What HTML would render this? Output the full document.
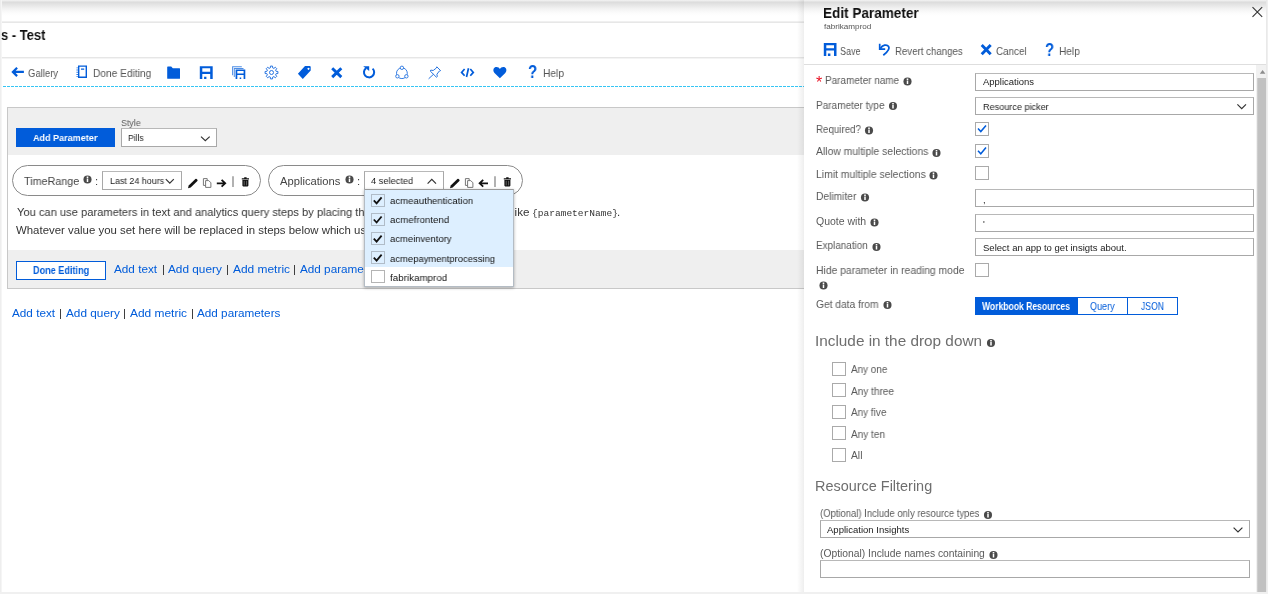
<!DOCTYPE html>
<html lang="en">
<head>
<meta charset="utf-8">
<title>Edit Parameter</title>
<style>
*{box-sizing:border-box;margin:0;padding:0}
html,body{width:1268px;height:594px;overflow:hidden;background:#fff}
body{position:relative;font-family:"Liberation Sans",sans-serif;font-size:12px;color:#333}
.a{position:absolute}
.t{position:absolute;white-space:nowrap;line-height:1;transform-origin:0 0;will-change:transform}
.k{color:#015cda}
svg{position:absolute;left:0;top:0;overflow:visible;pointer-events:none}
.inp{position:absolute;border:1px solid #a8a8a8;border-top-color:#b8b8b8;background:#fff}
.cb{position:absolute;width:14px;height:14px;border:1px solid #aaa;background:#fff}
.i{position:absolute;width:8px;height:8px;border-radius:50%;background:#4a4a4a;color:#fff}
.i:before{content:"";position:absolute;left:3.25px;top:1.3px;width:1.5px;height:1.5px;background:#fff;border-radius:50%}
.i:after{content:"";position:absolute;left:3.25px;top:3.4px;width:1.5px;height:3.2px;background:#fff}
</style>
</head>
<body>

<!-- page chrome -->
<div class="a" style="left:0;top:0;width:1268px;height:19px;background:linear-gradient(#f4f4f4 0,#dcdcdc 2.2px,#e4e4e4 4.5px,#f3f3f3 9px,#fcfcfc 13px,#fff 16px)"></div>
<div class="a" style="left:0;top:0;width:2px;height:594px;background:linear-gradient(90deg,#eee 0,#eee 1px,#f5f5f5 1px)"></div>
<div class="a" style="left:2px;top:21px;width:802px;height:1px;background:#f0f0f0"></div><div class="a" style="left:2px;top:22px;width:802px;height:1px;background:#e7e7e7"></div>
<div class="a" style="left:2px;top:57px;width:802px;height:1px;background:#e6e6e6"></div><div class="a" style="left:2px;top:58px;width:802px;height:1px;background:#f4f4f4"></div>
<div class="a" style="left:3px;top:86px;width:801px;height:1px;background:repeating-linear-gradient(90deg,#36c5f4 0,#36c5f4 3px,#fff 3px,#fff 4px)"></div>

<!-- parameters section -->
<div class="a" style="left:7px;top:107px;width:800px;height:182px;background:#efefef;border:1px solid #c8c8c8"></div>
<div class="a" style="left:8px;top:155px;width:800px;height:95px;background:#fff"></div>
<div class="a" style="left:16px;top:128px;width:99px;height:19px;background:#015cda"></div>
<div class="inp" style="left:121px;top:128px;width:96px;height:19px"></div>

<div class="a" style="left:12px;top:165px;width:249px;height:31px;border:1px solid #8a8a8a;border-radius:16px;background:#fff"></div>
<div class="a" style="left:268px;top:165px;width:255px;height:31px;border:1px solid #8a8a8a;border-radius:16px;background:#fff"></div>
<div class="inp" style="left:102px;top:171px;width:80px;height:19px"></div>
<div class="inp" style="left:364px;top:171px;width:80px;height:19px"></div>

<div class="a" style="left:16px;top:261px;width:90px;height:19px;border:1px solid #015cda;background:#fff"></div>

<div class="t" id="title" style="left:1.1px;top:28px;font-size:14.4px;font-weight:bold;color:#111;transform:scaleX(0.901);">s - Test</div>
<div class="t" id="g1" style="left:28.4px;top:68px;font-size:10.8px;color:#555;transform:scaleX(0.879);">Gallery</div>
<div class="t" id="g2" style="left:92.7px;top:68px;font-size:10.8px;color:#555;transform:scaleX(0.943);">Done Editing</div>
<div class="t" id="g3" style="left:543px;top:68px;font-size:10.8px;color:#555;transform:scaleX(0.946);">Help</div>
<div class="t" id="q1" style="left:528.3px;top:64px;font-size:17.5px;font-weight:bold;color:#015cda;transform:scaleX(0.86);">?</div>
<div class="t" id="addp" style="left:33.1px;top:133px;font-size:9.8px;font-weight:bold;color:#fff;transform:scaleX(0.922);">Add Parameter</div>
<div class="t" id="style" style="left:121.1px;top:118px;font-size:9.6px;color:#5a5a5a;transform:scaleX(0.924);">Style</div>
<div class="t" id="pills" style="left:128.3px;top:133px;font-size:9.4px;color:#222;transform:scaleX(0.908);">Pills</div>
<div class="t" id="tr" style="left:23.7px;top:176px;font-size:11.2px;color:#444;transform:scaleX(0.962);">TimeRange</div>
<div class="t" id="c1" style="left:95.3px;top:176px;font-size:11.2px;color:#444;">:</div>
<div class="t" id="l24" style="left:109.8px;top:176px;font-size:9.4px;color:#222;transform:scaleX(0.954);">Last 24 hours</div>
<div class="t" id="apps" style="left:280.2px;top:176px;font-size:11.2px;color:#444;">Applications</div>
<div class="t" id="c2" style="left:357.3px;top:176px;font-size:11.2px;color:#444;">:</div>
<div class="t" id="sel4" style="left:371.3px;top:176px;font-size:9.4px;color:#222;transform:scaleX(0.988);">4 selected</div>
<div class="t" id="ln1" style="left:16.6px;top:207px;font-size:11.3px;color:#333;transform:scaleX(0.986);">You can use parameters in text and analytics query steps by placing their names in braces,</div>
<div class="t" id="ln2" style="left:16.4px;top:225px;font-size:11.3px;color:#333;transform:scaleX(1.01);">Whatever value you set here will be replaced in steps below which use this parameter.</div>
<div class="t" id="like" style="left:511.6px;top:207px;font-size:11.3px;color:#333;transform:scaleX(1.032);">like</div>
<div class="t" id="mono" style="left:531.98px;top:209px;font-size:9.35px;color:#333;transform:scaleX(1.022);font-family:'Liberation Mono',monospace;">{parameterName}</div>
<div class="t" id="dot" style="left:617.2px;top:207px;font-size:11.3px;color:#333;">.</div>
<div class="t" id="done" style="left:33px;top:266px;font-size:10.3px;font-weight:bold;color:#015cda;transform:scaleX(0.884);">Done Editing</div>
<div class="t" id="r1a" style="left:114.1px;top:263px;font-size:11.6px;color:#015cda;transform:scaleX(1.013);">Add text</div>
<div class="t" id="r1s1" style="left:161.5px;top:263px;font-size:11.6px;color:#333;">|</div>
<div class="t" id="r1b" style="left:168.4px;top:263px;font-size:11.6px;color:#015cda;transform:scaleX(1.018);">Add query</div>
<div class="t" id="r1s2" style="left:225.5px;top:263px;font-size:11.6px;color:#333;">|</div>
<div class="t" id="r1c" style="left:232.7px;top:263px;font-size:11.6px;color:#015cda;transform:scaleX(1.029);">Add metric</div>
<div class="t" id="r1s3" style="left:292.9px;top:263px;font-size:11.6px;color:#333;">|</div>
<div class="t" id="r1d" style="left:299.8px;top:263px;font-size:11.6px;color:#015cda;transform:scaleX(1.011);">Add parameters</div>
<div class="t" id="r2a" style="left:11.7px;top:307px;font-size:11.6px;color:#015cda;transform:scaleX(1.013);">Add text</div>
<div class="t" id="r2s1" style="left:59.1px;top:307px;font-size:11.6px;color:#333;">|</div>
<div class="t" id="r2b" style="left:66px;top:307px;font-size:11.6px;color:#015cda;transform:scaleX(1.018);">Add query</div>
<div class="t" id="r2s2" style="left:123.1px;top:307px;font-size:11.6px;color:#333;">|</div>
<div class="t" id="r2c" style="left:130.3px;top:307px;font-size:11.6px;color:#015cda;transform:scaleX(1.029);">Add metric</div>
<div class="t" id="r2s3" style="left:190.5px;top:307px;font-size:11.6px;color:#333;">|</div>
<div class="t" id="r2d" style="left:197.4px;top:307px;font-size:11.6px;color:#015cda;transform:scaleX(1.011);">Add parameters</div>

<!-- dropdown -->
<div class="a" style="left:364px;top:189px;width:150px;height:98px;background:#fff;border:1px solid #b4bcc4;border-top-color:#999;box-shadow:0 1px 3px rgba(0,0,0,.3)"></div>
<div class="a" style="left:365px;top:190px;width:148px;height:77px;background:#ddefff"></div>
<div class="cb" style="left:371px;top:194px;width:14px;height:13px;background:transparent;border-color:#b0bcc8"></div>
<div class="cb" style="left:371px;top:213px;width:14px;height:13px;background:transparent;border-color:#b0bcc8"></div>
<div class="cb" style="left:371px;top:232px;width:14px;height:13px;background:transparent;border-color:#b0bcc8"></div>
<div class="cb" style="left:371px;top:251px;width:14px;height:13px;background:transparent;border-color:#b0bcc8"></div>
<div class="cb" style="left:371px;top:270px;width:14px;height:13px;border-color:#b4b4b4"></div>

<div class="t" id="d1" style="left:389.8px;top:196px;font-size:9.9px;color:#111;transform:scaleX(0.97);">acmeauthentication</div>
<div class="t" id="d2" style="left:389.8px;top:215px;font-size:9.9px;color:#111;transform:scaleX(0.978);">acmefrontend</div>
<div class="t" id="d3" style="left:389.8px;top:234px;font-size:9.9px;color:#111;transform:scaleX(0.958);">acmeinventory</div>
<div class="t" id="d4" style="left:389.8px;top:254px;font-size:9.9px;color:#111;transform:scaleX(0.957);">acmepaymentprocessing</div>
<div class="t" id="d5" style="left:389.8px;top:273px;font-size:9.9px;color:#111;transform:scaleX(0.991);">fabrikamprod</div>

<!-- right panel -->
<div class="a" style="left:797px;top:0;width:7px;height:592px;background:linear-gradient(90deg,rgba(0,0,0,0),rgba(0,0,0,.065))"></div>
<div class="a" style="left:804px;top:0;width:464px;height:594px;background:#fff"></div>
<div class="a" style="left:804px;top:0;width:464px;height:19px;background:linear-gradient(#f4f4f4 0,#dcdcdc 2.2px,#e4e4e4 4.5px,#f3f3f3 9px,#fcfcfc 13px,#fff 16px)"></div>
<div class="a" style="left:804px;top:64px;width:462px;height:1px;background:#dedede"></div>

<div class="inp" style="left:975px;top:73px;width:279px;height:18px"></div>
<div class="inp" style="left:975px;top:97px;width:279px;height:18px"></div>
<div class="cb" style="left:975px;top:122px"></div>
<div class="cb" style="left:975px;top:144px"></div>
<div class="cb" style="left:975px;top:166px"></div>
<div class="inp" style="left:975px;top:189px;width:279px;height:18px"></div>
<div class="inp" style="left:975px;top:214px;width:279px;height:18px"></div>
<div class="inp" style="left:975px;top:238px;width:279px;height:18px"></div>
<div class="cb" style="left:975px;top:263px"></div>

<div class="a" style="left:975px;top:297px;width:203px;height:18px;border:1px solid #015cda;background:#fff"></div>
<div class="a" style="left:975px;top:297px;width:103px;height:18px;background:#015cda"></div>
<div class="a" style="left:1127px;top:297px;width:1px;height:18px;background:#015cda"></div>

<div class="cb" style="left:832px;top:362px"></div>
<div class="cb" style="left:832px;top:383px"></div>
<div class="cb" style="left:832px;top:405px"></div>
<div class="cb" style="left:832px;top:426px"></div>
<div class="cb" style="left:832px;top:448px"></div>

<div class="inp" style="left:820px;top:520px;width:430px;height:18px"></div>
<div class="inp" style="left:820px;top:560px;width:430px;height:18px"></div>


<div class="t" id="ptitle" style="left:823.1px;top:5px;font-size:15px;font-weight:bold;color:#111;transform:scaleX(0.904);">Edit Parameter</div>
<div class="t" id="psub" style="left:824px;top:23px;font-size:7.8px;color:#555;transform:scaleX(1.041);">fabrikamprod</div>
<div class="t" id="psave" style="left:840.4px;top:46px;font-size:10.8px;color:#555;transform:scaleX(0.837);">Save</div>
<div class="t" id="prev" style="left:894.8px;top:46px;font-size:10.8px;color:#555;transform:scaleX(0.895);">Revert changes</div>
<div class="t" id="pcan" style="left:996px;top:46px;font-size:10.8px;color:#555;transform:scaleX(0.912);">Cancel</div>
<div class="t" id="phelp" style="left:1059.2px;top:46px;font-size:10.8px;color:#555;transform:scaleX(0.937);">Help</div>
<div class="t" id="q2" style="left:1044.7px;top:42px;font-size:17.5px;font-weight:bold;color:#015cda;transform:scaleX(0.85);">?</div>
<div class="t" id="star" style="left:815.8px;top:75px;font-size:16px;color:#e81123;">*</div>
<div class="t" id="L1" style="left:824.7px;top:75px;font-size:10.5px;color:#5a5a5a;transform:scaleX(0.949);">Parameter name</div>
<div class="t" id="L2" style="left:816.1px;top:100px;font-size:10.5px;color:#5a5a5a;transform:scaleX(0.955);">Parameter type</div>
<div class="t" id="L3" style="left:816.1px;top:124px;font-size:10.5px;color:#5a5a5a;transform:scaleX(0.928);">Required?</div>
<div class="t" id="L4" style="left:816.1px;top:146px;font-size:10.5px;color:#5a5a5a;transform:scaleX(0.987);">Allow multiple selections</div>
<div class="t" id="L5" style="left:816.1px;top:169px;font-size:10.5px;color:#5a5a5a;transform:scaleX(0.989);">Limit multiple selections</div>
<div class="t" id="L6" style="left:816.1px;top:191px;font-size:10.5px;color:#5a5a5a;transform:scaleX(0.976);">Delimiter</div>
<div class="t" id="L7" style="left:816.1px;top:216px;font-size:10.5px;color:#5a5a5a;transform:scaleX(0.991);">Quote with</div>
<div class="t" id="L8" style="left:816.1px;top:240px;font-size:10.5px;color:#5a5a5a;transform:scaleX(0.943);">Explanation</div>
<div class="t" id="L9" style="left:816.1px;top:265px;font-size:10.5px;color:#5a5a5a;transform:scaleX(0.986);">Hide parameter in reading mode</div>
<div class="t" id="L10" style="left:816.1px;top:299px;font-size:10.5px;color:#5a5a5a;transform:scaleX(0.974);">Get data from</div>
<div class="t" id="I1" style="left:982.5px;top:77px;font-size:9.4px;color:#222;transform:scaleX(1.011);">Applications</div>
<div class="t" id="I2" style="left:982.5px;top:102px;font-size:9.4px;color:#222;transform:scaleX(0.97);">Resource picker</div>
<div class="t" id="I3" style="left:983px;top:195px;font-size:9.4px;color:#222;">,</div>
<div class="t" id="I4" style="left:983px;top:219px;font-size:9.4px;color:#222;">'</div>
<div class="t" id="I5" style="left:982.5px;top:243px;font-size:9.4px;color:#222;transform:scaleX(1.017);">Select an app to get insigts about.</div>
<div class="t" id="B1" style="left:982.2px;top:302px;font-size:10.1px;font-weight:bold;color:#fff;transform:scaleX(0.85);">Workbook Resources</div>
<div class="t" id="B2" style="left:1089.8px;top:302px;font-size:10.2px;color:#015cda;transform:scaleX(0.887);">Query</div>
<div class="t" id="B3" style="left:1141.3px;top:302px;font-size:10.2px;color:#015cda;transform:scaleX(0.847);">JSON</div>
<div class="t" id="H1" style="left:815.03px;top:334px;font-size:14.3px;color:#6e6e6e;transform:scaleX(1.072);">Include in the drop down</div>
<div class="t" id="H2" style="left:815.49px;top:479px;font-size:14.3px;color:#6e6e6e;transform:scaleX(1.01);">Resource Filtering</div>
<div class="t" id="C1" style="left:850.5px;top:365px;font-size:10.3px;color:#5a5a5a;transform:scaleX(0.964);">Any one</div>
<div class="t" id="C2" style="left:850.5px;top:387px;font-size:10.3px;color:#5a5a5a;transform:scaleX(0.979);">Any three</div>
<div class="t" id="C3" style="left:850.5px;top:408px;font-size:10.3px;color:#5a5a5a;transform:scaleX(0.967);">Any five</div>
<div class="t" id="C4" style="left:850.5px;top:430px;font-size:10.3px;color:#5a5a5a;transform:scaleX(0.975);">Any ten</div>
<div class="t" id="C5" style="left:850.5px;top:451px;font-size:10.3px;color:#5a5a5a;transform:scaleX(0.959);">All</div>
<div class="t" id="O1" style="left:820.2px;top:509px;font-size:10.3px;color:#5a5a5a;transform:scaleX(0.919);">(Optional) Include only resource types</div>
<div class="t" id="O2" style="left:820.2px;top:549px;font-size:10.3px;color:#5a5a5a;">(Optional) Include names containing</div>
<div class="t" id="I6" style="left:827.2px;top:525px;font-size:9.4px;color:#222;transform:scaleX(1.017);">Application Insights</div>

<!-- scrollbar -->
<div class="a" style="left:1256px;top:65px;width:10px;height:527px;background:#f1f1f1"></div>
<div class="a" style="left:1257px;top:78px;width:9px;height:514px;background:linear-gradient(90deg,#dadada 0,#c1c1c1 1px)"></div>
<div class="a" style="left:1266px;top:0;width:2px;height:594px;background:linear-gradient(90deg,#e6e6e6,#f2f2f2)"></div>
<div class="a" style="left:0;top:592px;width:1268px;height:2px;background:#f0f0f0"></div>

<svg width="1268" height="594" viewBox="0 0 1268 594">
<g fill="#015cda" stroke="none">
 <!-- back arrow -->
 <path d="M23.9 71.9H13.6M17.1 67.7L12.9 71.9L17.1 76.1" fill="none" stroke="#015cda" stroke-width="2.2"/>
 <!-- notebook -->
 <path d="M78 65.4H87V78H78Z M79.4 66.8V76.6H85.6V66.8Z M81 68.6H84.2V69.8H81Z" fill-rule="evenodd"/>
 <path d="M76.4 67.4H78V68.3H76.4Z M76.4 69.6H78V70.5H76.4Z M76.4 71.8H78V72.7H76.4Z M76.4 74H78V74.9H76.4Z M76.4 76.2H78V77.1H76.4Z" opacity=".8"/>
 <!-- folder -->
 <path d="M167.2 67V78.2Q167.2 78.7 167.7 78.7H179.5Q180 78.7 180 78.2V68.7Q180 68.2 179.5 68.2H172.8L171.2 66.6H167.7Q167.2 66.6 167.2 67Z"/>
 <!-- save -->
 <path d="M199.8 66.2H212.7V78.9H210.2V73.9H202.3V78.9H199.8Z M202.3 68.2V71.7H210.2V68.2Z M204.1 76.8H206.4V78.9H204.1Z" fill-rule="evenodd"/>
 <!-- save as -->
 <path d="M235.6 69.4H245.3V78.9H243.6V75.1H237.3V78.9H235.6Z M237.3 70.9V73.6H243.6V70.9Z M239.7 77.6H241.2V78.9H239.7Z" fill-rule="evenodd"/>
 <path d="M232.1 66.2H241.8V67.2H233.1V75.2H232.1Z M233.8 67.9H243.5V68.9H234.8V77H233.8Z" opacity=".7"/>
 <!-- tag -->
 <path d="M305 66H309.6Q310.7 66 310.7 67.1V70.6L302.8 78.9L297.9 73.7Z M308.5 67.7a1 1 0 1 0 .01 0Z" fill-rule="evenodd"/>
 <!-- heart -->
 <path d="M499.9 78.2L494.5 72.9C492.6 70.9 493.2 67.6 495.9 67C497.6 66.7 499.2 67.6 499.9 69.1C500.6 67.6 502.2 66.7 503.9 67C506.6 67.6 507.2 70.9 505.3 72.9Z"/>
</g>
<g fill="none" stroke="#015cda">
 <!-- X -->
 <path d="M332.2 68.2L341.3 77.1M341.3 68.2L332.2 77.1" stroke-width="2.9"/>
 <!-- refresh -->
 <path d="M372.6 68.6A5.1 5.1 0 1 1 366 68.2" stroke-width="2"/>
 <path d="M363.2 66.2H369.2V71Z" fill="#015cda" stroke="none"/>
 <!-- gear -->
 <g stroke-width="1" transform="translate(271.5 72.5)" opacity=".85">
  <circle r="2"/>
  <path d="M-1.22 -4.54L-1.02 -6.42L1.02 -6.42L1.22 -4.54L2.35 -4.07L3.82 -5.26L5.26 -3.82L4.07 -2.35L4.54 -1.22L6.42 -1.02L6.42 1.02L4.54 1.22L4.07 2.35L5.26 3.82L3.82 5.26L2.35 4.07L1.22 4.54L1.02 6.42L-1.02 6.42L-1.22 4.54L-2.35 4.07L-3.82 5.26L-5.26 3.82L-4.07 2.35L-4.54 1.22L-6.42 1.02L-6.42 -1.02L-4.54 -1.22L-4.07 -2.35L-5.26 -3.82L-3.82 -5.26L-2.35 -4.07Z" stroke-linejoin="round"/>
 </g>
 <!-- share -->
 <g stroke-width="1" opacity=".8">
  <circle cx="401.9" cy="73.2" r="5.4"/>
  <circle cx="401.9" cy="67.8" r="1.7" fill="#fff"/>
  <circle cx="397.4" cy="76.3" r="1.7" fill="#fff"/>
  <circle cx="406.4" cy="76.3" r="1.7" fill="#fff"/>
 </g>
 <!-- pin -->
 <g stroke-width="1" opacity=".85">
  <path d="M436.8 66.8L440.6 70.6L439.4 71L436.9 74.2L437.3 76.6L436.4 77.2L430.2 71L430.8 70.1L433.2 70.5L436.4 68Z"/>
  <path d="M433.6 74.2L428.6 78.8"/>
 </g>
 <!-- code -->
 <path d="M464.6 69L461.6 72.4L464.6 75.8M470.3 69L473.3 72.4L470.3 75.8M468.5 68.2L466.5 77" stroke-width="1.7"/>
</g>

<!-- info icons -->
<g>
<circle cx="87.5" cy="179.5" r="4.05" fill="#4a4a4a"/><path d="M86.75 178.60h1.5v3.5h-1.5z M86.70 176.50h1.6v1.4h-1.6z" fill="#fff"/>
<circle cx="349.5" cy="179.5" r="4.05" fill="#4a4a4a"/><path d="M348.75 178.60h1.5v3.5h-1.5z M348.70 176.50h1.6v1.4h-1.6z" fill="#fff"/>
<circle cx="907.5" cy="81.5" r="4.05" fill="#4a4a4a"/><path d="M906.75 80.60h1.5v3.5h-1.5z M906.70 78.50h1.6v1.4h-1.6z" fill="#fff"/>
<circle cx="893" cy="106" r="4.05" fill="#4a4a4a"/><path d="M892.25 105.10h1.5v3.5h-1.5z M892.20 103.00h1.6v1.4h-1.6z" fill="#fff"/>
<circle cx="869" cy="130.5" r="4.05" fill="#4a4a4a"/><path d="M868.25 129.60h1.5v3.5h-1.5z M868.20 127.50h1.6v1.4h-1.6z" fill="#fff"/>
<circle cx="936.5" cy="153" r="4.05" fill="#4a4a4a"/><path d="M935.75 152.10h1.5v3.5h-1.5z M935.70 150.00h1.6v1.4h-1.6z" fill="#fff"/>
<circle cx="933.5" cy="175.5" r="4.05" fill="#4a4a4a"/><path d="M932.75 174.60h1.5v3.5h-1.5z M932.70 172.50h1.6v1.4h-1.6z" fill="#fff"/>
<circle cx="865" cy="197.5" r="4.05" fill="#4a4a4a"/><path d="M864.25 196.60h1.5v3.5h-1.5z M864.20 194.50h1.6v1.4h-1.6z" fill="#fff"/>
<circle cx="874.5" cy="222.5" r="4.05" fill="#4a4a4a"/><path d="M873.75 221.60h1.5v3.5h-1.5z M873.70 219.50h1.6v1.4h-1.6z" fill="#fff"/>
<circle cx="876.5" cy="247" r="4.05" fill="#4a4a4a"/><path d="M875.75 246.10h1.5v3.5h-1.5z M875.70 244.00h1.6v1.4h-1.6z" fill="#fff"/>
<circle cx="823.5" cy="285.5" r="4.05" fill="#4a4a4a"/><path d="M822.75 284.60h1.5v3.5h-1.5z M822.70 282.50h1.6v1.4h-1.6z" fill="#fff"/>
<circle cx="887.5" cy="305" r="4.05" fill="#4a4a4a"/><path d="M886.75 304.10h1.5v3.5h-1.5z M886.70 302.00h1.6v1.4h-1.6z" fill="#fff"/>
<circle cx="991" cy="343" r="4.05" fill="#4a4a4a"/><path d="M990.25 342.10h1.5v3.5h-1.5z M990.20 340.00h1.6v1.4h-1.6z" fill="#fff"/>
<circle cx="988" cy="515" r="4.05" fill="#4a4a4a"/><path d="M987.25 514.10h1.5v3.5h-1.5z M987.20 512.00h1.6v1.4h-1.6z" fill="#fff"/>
<circle cx="993.5" cy="555" r="4.05" fill="#4a4a4a"/><path d="M992.75 554.10h1.5v3.5h-1.5z M992.70 552.00h1.6v1.4h-1.6z" fill="#fff"/>
</g>
<!-- right panel icons -->
<g fill="#015cda">
 <path d="M823.8 43H836.5V55.9H834V50.6H826.3V55.9H823.8Z M826.3 45.3V48.3H834V45.3Z M827.9 53.6H830.4V55.9H827.9Z" fill-rule="evenodd"/>
</g>
<g fill="none" stroke="#015cda">
 <path d="M981.7 45.1L990.7 54.2M990.7 45.1L981.7 54.2" stroke-width="2.9"/>
 <path d="M880.4 48.5C882.5 45 886.8 43.9 888.6 46.5C890.2 49 888.2 51.4 883.3 55.3" stroke-width="1.8"/>
 <path d="M879.7 43.8V49.1H885.2" stroke-width="1.7"/>
</g>
<!-- close -->
<path d="M1252.5 7.2L1262.2 16.8M1262.2 7.2L1252.5 16.8" stroke="#333" stroke-width="1.1" fill="none"/>

<!-- chevrons -->
<g fill="none" stroke="#333" stroke-width="1.2">
 <path d="M201 136.6L205.3 140.6L209.7 136.6"/>
 <path d="M165.8 179.2L169.8 183.2L173.8 179.2"/>
 <path d="M427.6 183.6L431.8 179.4L436 183.6"/>
 <path d="M1237.4 104.4L1241.7 108.6L1246 104.4"/>
 <path d="M1233.6 527.6L1238 531.9L1242.4 527.6"/>
</g>
<!-- scrollbar arrow -->
<path d="M1259.8 73.7L1262.6 70L1265.4 73.7Z" fill="#8c8c8c"/>

<!-- checkmarks -->
<g fill="none" stroke="#015cda" stroke-width="1.5">
 <path d="M978 128.6L980.8 131.6L986 125.4"/>
 <path d="M978 150.8L980.8 153.8L986 147.6"/>
</g>
<g fill="none" stroke="#111" stroke-width="1.8">
 <path d="M373.8 200.4L376.6 203.4L381.6 197.4"/>
 <path d="M373.8 219.5L376.6 222.5L381.6 216.5"/>
 <path d="M373.8 238.6L376.6 241.6L381.6 235.6"/>
 <path d="M373.8 257.7L376.6 260.7L381.6 254.7"/>
</g>

<!-- pill icons -->
<g>
 <path d="M188 188.2L188.7 185.6L195.4 178.9Q196 178.4 196.6 178.9L197.4 179.7Q197.9 180.3 197.4 180.9L190.7 187.6Z" fill="#111"/>
 <g fill="#fff" stroke="#777" stroke-width="1">
  <path d="M203.4 178.6H207.2V185.4H203.4Z"/>
  <path d="M205.6 180.6H208.8L210.9 182.8V187.4H205.6Z"/>
 </g>
 <path d="M233 176.2V187" stroke="#888" stroke-width="1.3" fill="none"/>
 <path d="M241.8 178.3H249V179.4H241.8Z M244.2 177.3H246.6V178.3H244.2Z M242.4 180H248.4V185.6Q248.4 186.4 247.6 186.4H243.2Q242.4 186.4 242.4 185.6Z" fill="#111"/>
 <path d="M244.2 180.8V185.4M246.6 180.8V185.4" stroke="#999" stroke-width=".6" fill="none"/>
</g>
<path d="M216.8 183.3H225M221.6 179.9L225.2 183.3L221.6 186.7" stroke="#111" stroke-width="1.8" fill="none"/>
<g transform="translate(262 0)">
 <path d="M188 188.2L188.7 185.6L195.4 178.9Q196 178.4 196.6 178.9L197.4 179.7Q197.9 180.3 197.4 180.9L190.7 187.6Z" fill="#111"/>
 <g fill="#fff" stroke="#777" stroke-width="1">
  <path d="M203.4 178.6H207.2V185.4H203.4Z"/>
  <path d="M205.6 180.6H208.8L210.9 182.8V187.4H205.6Z"/>
 </g>
 <path d="M233 176.2V187" stroke="#888" stroke-width="1.3" fill="none"/>
 <path d="M241.8 178.3H249V179.4H241.8Z M244.2 177.3H246.6V178.3H244.2Z M242.4 180H248.4V185.6Q248.4 186.4 247.6 186.4H243.2Q242.4 186.4 242.4 185.6Z" fill="#111"/>
 <path d="M244.2 180.8V185.4M246.6 180.8V185.4" stroke="#999" stroke-width=".6" fill="none"/>
</g>
<path d="M488 183.3H479.8M483.2 179.9L479.6 183.3L483.2 186.7" stroke="#111" stroke-width="1.8" fill="none"/>
</svg>


</body>
</html>
